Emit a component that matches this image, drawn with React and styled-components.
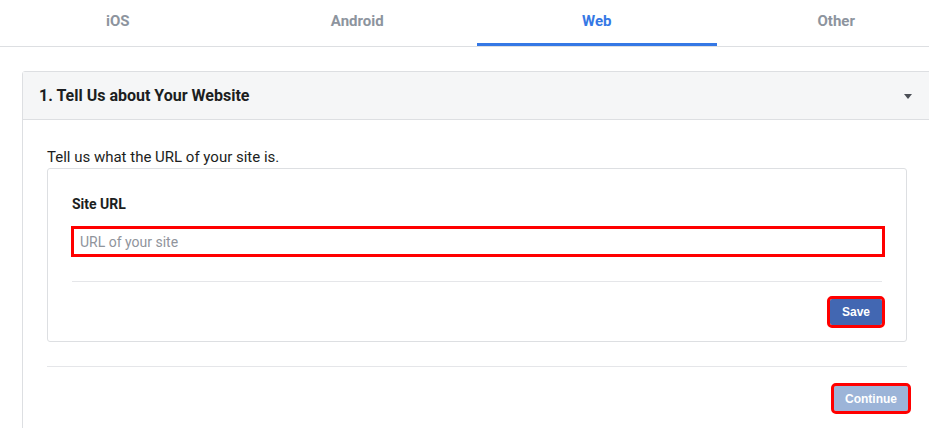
import React from 'react'
import styled, { createGlobalStyle } from 'styled-components'

const GlobalStyle = createGlobalStyle`
  body {
    margin: 0;
    background: #fff;
    overflow: hidden;
    font-family: Roboto, "Liberation Sans", Arial, sans-serif;
    color: #1c1e21;
  }
`

const Page = styled.div`
  width: 958px;
  margin-left: -2px;
`

const Tabs = styled.div`
  display: flex;
  height: 46px;
  border-bottom: 1px solid #dddfe2;
`

const Tab = styled.div`
  flex: 1;
  display: flex;
  align-items: center;
  justify-content: center;
  padding-bottom: 2px;
  box-sizing: border-box;
  font-size: 15px;
  font-weight: 700;
  color: ${props => (props.active ? '#3578e5' : '#8d949e')};
  border-bottom: 3px solid ${props => (props.active ? '#3578e5' : 'transparent')};
`

const Panel = styled.div`
  margin: 24px 24px 0;
  border: 1px solid #dddfe2;
  border-radius: 3px;
  height: 400px;
`

const PanelHeader = styled.div`
  display: flex;
  align-items: center;
  justify-content: space-between;
  height: 47px;
  padding: 0 19px 0 16px;
  background: #f5f6f7;
  border-bottom: 1px solid #dddfe2;
`

const PanelTitle = styled.div`
  font-size: 16px;
  font-weight: 700;
  color: #1c1e21;
`

const Caret = styled.div`
  width: 0;
  height: 0;
  border-left: 4px solid transparent;
  border-right: 4px solid transparent;
  border-top: 5px solid #4b4f56;
  margin-top: 2px;
`

const PanelBody = styled.div`
  padding: 28px 24px 0;
`

const Intro = styled.p`
  margin: 0 0 2px;
  font-size: 15px;
  line-height: 18px;
  color: #1c1e21;
`

const Card = styled.div`
  border: 1px solid #dddfe2;
  border-radius: 3px;
  padding: 24px 24px 0;
`

const Label = styled.div`
  font-size: 14px;
  font-weight: 700;
  line-height: 22px;
  color: #1c1e21;
  margin-bottom: 14px;
`

const Input = styled.input`
  display: block;
  box-sizing: border-box;
  width: calc(100% - 2px);
  margin-left: 2px;
  height: 25px;
  border: none;
  outline: 3px solid #ff0000;
  padding: 0 6px;
  font-family: Roboto, "Liberation Sans", Arial, sans-serif;
  font-size: 14px;
  color: #1c1e21;
  &::placeholder {
    color: #90949c;
  }
`

const Divider = styled.div`
  height: 1px;
  background: #e5e6e9;
  margin-top: ${props => props.top}px;
`

const Actions = styled.div`
  display: flex;
  justify-content: flex-end;
  padding: ${props => props.pad};
`

const Button = styled.button`
  border: none;
  outline: 3px solid #ff0000;
  border-radius: 2px;
  height: ${props => props.h}px;
  padding: 0 ${props => props.px}px;
  background: ${props => (props.disabled ? '#9cb4d8' : '#4267b2')};
  color: #fff;
  font-family: "Liberation Sans", Arial, sans-serif;
  font-size: 12px;
  font-weight: 700;
`

export default function App() {
  return (
    <Page>
      <GlobalStyle />
      <Tabs>
        <Tab>iOS</Tab>
        <Tab>Android</Tab>
        <Tab active>Web</Tab>
        <Tab>Other</Tab>
      </Tabs>
      <Panel>
        <PanelHeader>
          <PanelTitle>1. Tell Us about Your Website</PanelTitle>
          <Caret />
        </PanelHeader>
        <PanelBody>
          <Intro>Tell us what the URL of your site is.</Intro>
          <Card>
            <Label>Site URL</Label>
            <Input placeholder="URL of your site" />
            <Divider top={27} />
            <Actions pad="17px 0 16px">
              <Button h={26} px={12}>Save</Button>
            </Actions>
          </Card>
          <Divider top={24} />
          <Actions pad="19px 0 0">
            <Button h={25} px={11} disabled style={{ marginRight: '-1px' }}>Continue</Button>
          </Actions>
        </PanelBody>
      </Panel>
    </Page>
  )
}
